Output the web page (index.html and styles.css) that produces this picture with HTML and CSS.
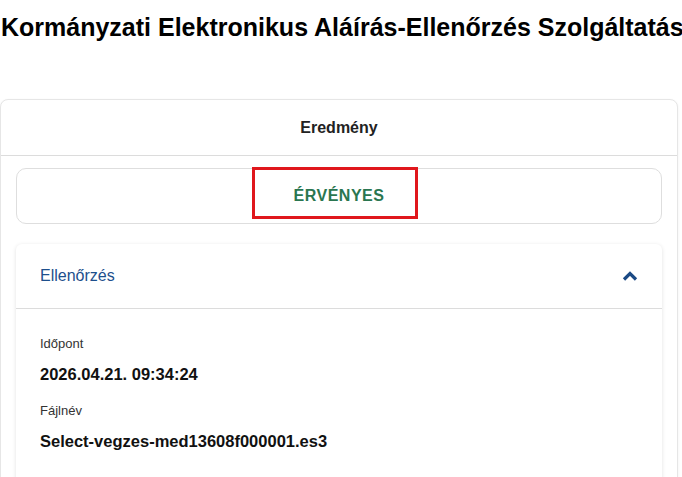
FILE: index.html
```html
<!DOCTYPE html>
<html lang="hu">
<head>
<meta charset="utf-8">
<title>Kormányzati Elektronikus Aláírás-Ellenőrzés Szolgáltatás</title>
<link rel="stylesheet" href="styles.css">
</head>
<body>
<main class="page">
  <h1 class="title">Kormányzati Elektronikus Aláírás-Ellenőrzés Szolgáltatás</h1>
  <section class="card">
    <div class="card-head">Eredmény</div>
    <div class="card-body">
      <div class="status-box">
        <span class="status">ÉRVÉNYES</span>
      </div>
      <div class="acc">
        <div class="acc-head">
          <span class="acc-title">Ellenőrzés</span>
          <svg class="chev" width="16" height="10" viewBox="0 0 16 10"><path d="M2 8.5 L8 2.5 L14 8.5" fill="none" stroke="#1b4a85" stroke-width="3.2"/></svg>
        </div>
        <div class="acc-body">
          <div class="field">
            <div class="label">Időpont</div>
            <div class="value">2026.04.21. 09:34:24</div>
          </div>
          <div class="field">
            <div class="label">Fájlnév</div>
            <div class="value">Select-vegzes-med13608f000001.es3</div>
          </div>
        </div>
      </div>
    </div>
  </section>
</main>
</body>
</html>
```
FILE: styles.css
```css
html, body {
  margin: 0;
  padding: 0;
  background: #fff;
  overflow: hidden;
}
body {
  font-family: "Liberation Sans", Arial, sans-serif;
  color: #1a1a1a;
}
.page {
  width: 682px;
}
.title {
  margin: 0;
  padding: 12px 0 0 1px;
  height: 99px;
  box-sizing: border-box;
  font-size: 25px;
  line-height: 30px;
  font-weight: bold;
  white-space: nowrap;
  color: #000;
}
.card {
  margin: 0 4px 0 0;
  border: 1px solid #e6e6e6;
  border-radius: 8px;
  box-shadow: 0 1px 3px rgba(0,0,0,0.06);
  background: #fff;
}
.card-head {
  height: 55px;
  display: flex;
  align-items: center;
  justify-content: center;
  font-weight: bold;
  font-size: 16px;
  border-bottom: 1px solid #dcdcdc;
  color: #222;
}
.card-body {
  padding: 12px 15px 0 15px;
}
.status-box {
  height: 54px;
  border: 1px solid #dedede;
  border-radius: 10px;
  display: flex;
  align-items: center;
  justify-content: center;
}
.status {
  position: relative;
  color: #2a7650;
  font-weight: bold;
  font-size: 16px;
  line-height: 18px;
  letter-spacing: 0.5px;
}
.status::after {
  content: "";
  position: absolute;
  left: -42px;
  right: -34px;
  top: -20px;
  bottom: -14px;
  border: 3px solid #e0171c;
}
.acc {
  margin-top: 20px;
  border-radius: 6px;
  box-shadow: 0 1px 4px rgba(0,0,0,0.12);
  background: #fff;
}
.acc-head {
  height: 64px;
  display: flex;
  align-items: center;
  justify-content: space-between;
  padding: 0 24px;
  border-bottom: 1px solid #dcdcdc;
}
.acc-title {
  color: #1d4f8c;
  font-size: 16px;
}
.chev { display: block; }
.acc-body {
  padding: 27px 24px 20px;
}
.label {
  font-size: 13px;
  line-height: 15px;
  color: #333;
  margin-bottom: 14px;
}
.value {
  font-size: 16.5px;
  line-height: 19px;
  font-weight: bold;
  color: #111;
  margin-bottom: 19px;
}
```
